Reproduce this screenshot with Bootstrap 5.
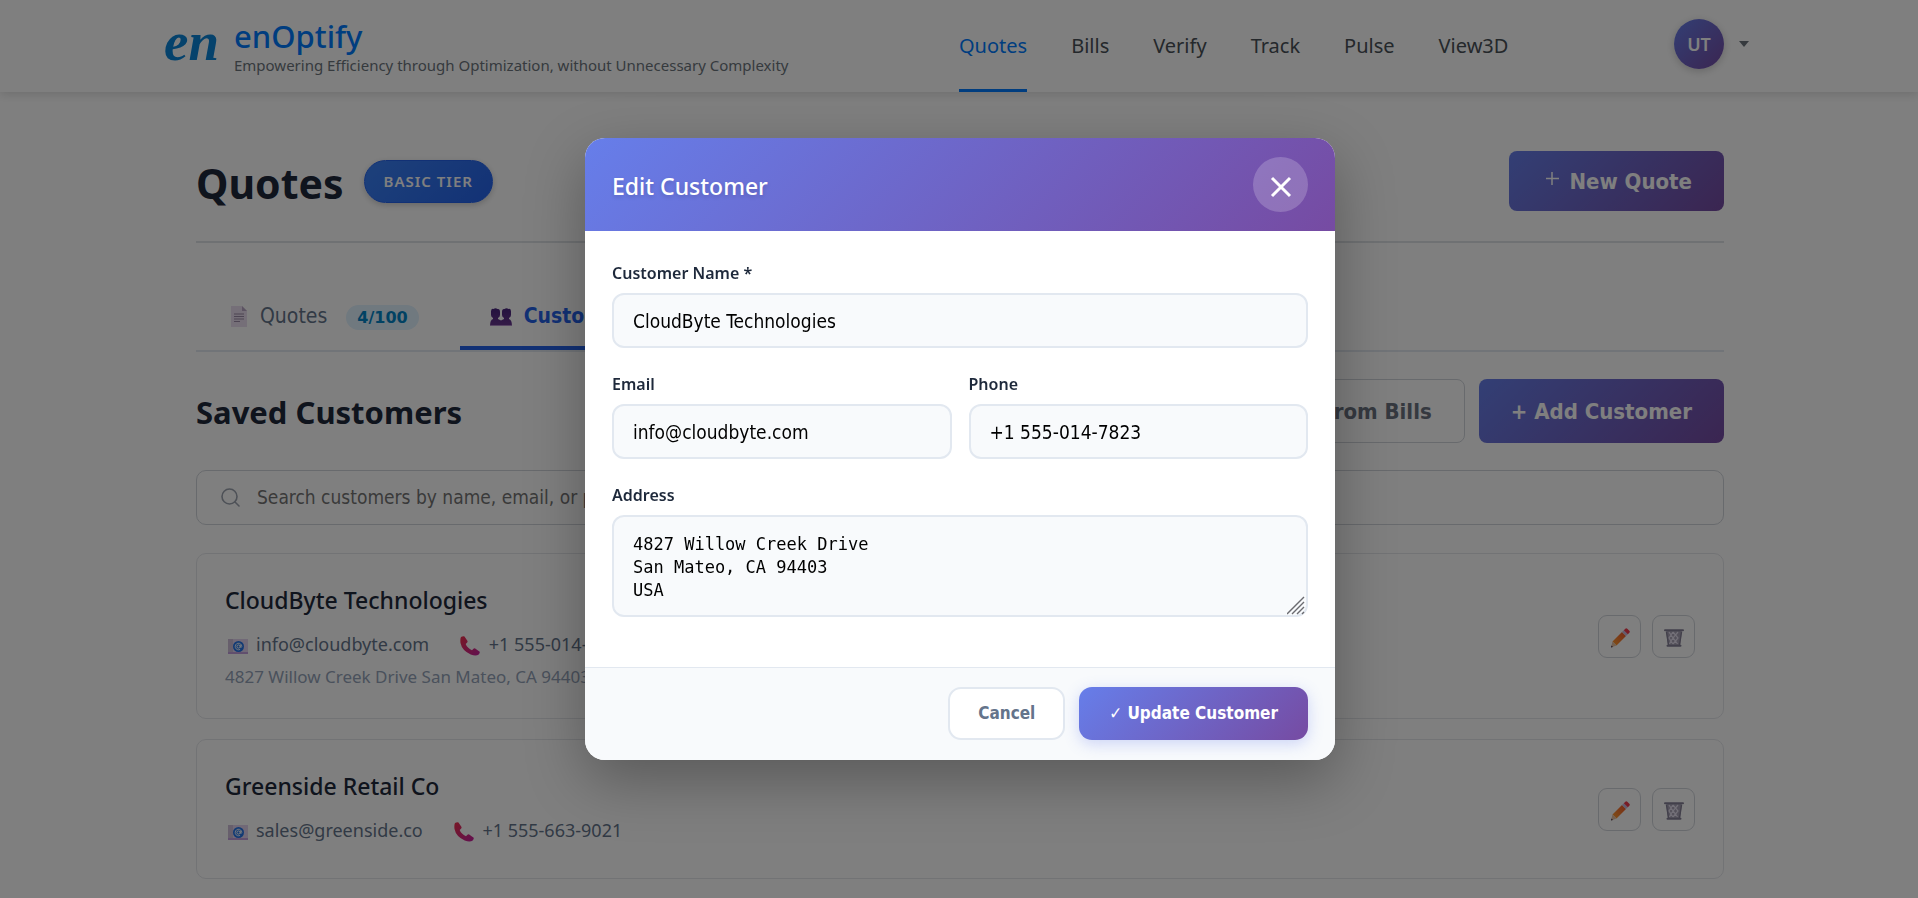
<!DOCTYPE html>
<html lang="en">
<head>
<meta charset="utf-8">
<meta name="viewport" content="width=device-width, initial-scale=1">
<title>enOptify – Quotes</title>
<link rel="stylesheet" href="https://cdn.jsdelivr.net/npm/bootstrap@5.3.0/dist/css/bootstrap.min.css">
<style>
:root{
  --ui:"Noto Sans","Open Sans",sans-serif;
  --alt:"DejaVu Sans Condensed","DejaVu Sans",sans-serif;
  --brand-grad:linear-gradient(135deg,#667eea 0%,#764ba2 100%);
}
body{font-family:var(--ui);background:#fff;color:#1e293b;overflow:hidden}

/* top bar */
.topbar{height:92px;background:#fff;box-shadow:0 2px 10px rgba(0,0,0,.15)}
.topbar-in{max-width:1590px;height:100%;display:grid;grid-template-columns:1fr 1fr}
.logo-mark{width:58px;font-family:"Liberation Serif",serif;font-style:italic;font-weight:700;font-size:55px;line-height:48px;padding-bottom:8px;color:#0a84d8}
.brand-name{font-size:31px;line-height:37px;font-weight:500;color:#007bff}
.brand-tag{font-size:15px;line-height:20px;color:#6c757d}
.main-nav{gap:44px}
.main-nav .nav-link{display:flex;align-items:center;height:92px;padding:3px 0 0;font-size:20px;color:#495057;border-bottom:3px solid transparent}
.main-nav .nav-link.active{color:#007bff;border-color:#007bff}
.user-menu{border:0;background:none;padding:0 5px 4px 0;gap:15px}
.avatar{width:50px;height:50px;border-radius:50%;background:var(--brand-grad);color:#fff;font-size:18px;font-weight:600;box-shadow:0 2px 8px rgba(0,0,0,.2)}
.caret{border:5px solid transparent;border-top:6px solid #6c757d;border-bottom:0}

/* page */
.page{max-width:1530px;padding:0 0 0 2px}
.title-row{padding:59px 0 30px;border-bottom:2px solid #dee2e6}
.page-title{font-size:41px;line-height:56px;font-weight:700;margin:0;padding-top:4px}
.tier{height:43px;padding:0 19px;border:1px solid #2563eb;border-radius:22px;background:linear-gradient(135deg,#3b82f6,#2563eb);color:#fff;font-size:15px;font-weight:600;letter-spacing:1px;box-shadow:0 2px 6px rgba(0,0,0,.2)}
.grad-btn,.plain-btn{font-family:var(--alt);font-weight:700;font-size:22px;border-radius:8px;padding:0 32px;white-space:nowrap}
.grad-btn{border:0;background:var(--brand-grad);color:#fff}
.plain-btn{border:1px solid #d1d5db;background:#fff;color:#6b7280}
.tab-row{padding-top:43px;gap:9px;border-bottom:2px solid #e2e8f0}
.tab-btn{display:flex;align-items:center;height:64px;padding:2px 32px 0 34px;border:0;border-bottom:4px solid transparent;background:none;font-family:var(--alt);font-size:21px;color:#64748b}
.tab-btn svg{margin-right:12px}
.tab-btn.active{padding-left:30px;font-weight:700;color:#2563eb;border-color:#2563eb}
.count{height:25px;margin-left:19px;padding:0 11px;border-radius:13px;background:#e0f2fe;color:#0284c7;font-family:"DejaVu Sans",sans-serif;font-weight:700;font-size:16px;line-height:25px}
.section-row{padding:27px 0}
.section-row h2{font-size:31px;font-weight:700;margin:0;padding-top:4px}
.section-row button{height:64px}
.btn-pair{gap:14px}
.search-box{height:55px;border:1px solid #d1d5db;border-radius:10px;padding:0 24px;gap:15px;margin-bottom:28px}
.search-box input{flex:1;border:0;outline:0;background:none;font-family:var(--alt);font-size:19px}
.search-box input::placeholder{color:#757575}
.cust{border:1px solid #e5e7eb;border-radius:10px;padding:28px;margin-bottom:20px}
.cust h3{font-size:23px;line-height:36px;font-weight:500;margin:0 0 12px}
.cust-info{font-size:18px;line-height:28px;color:#64748b;margin-bottom:6px;gap:31px}
.cust-info svg{margin:0 8px 0 3px}
.cust-info .tel{margin:0 4px 0 0}
.cust-addr{font-size:17px;line-height:26px;color:#94a3b8}
.tools{gap:11px}
.icon-btn{width:43px;height:43px;border:1px solid #d1d5db;border-radius:9px;background:#fff;padding:0}

/* dialog */
#editCustomer{padding-left:2px}
#editCustomer .modal-dialog{max-width:750px}
#editCustomer .modal-content{border:0;border-radius:20px;overflow:hidden;box-shadow:0 20px 60px rgba(0,0,0,.3)}
#editCustomer .modal-header{height:93px;padding:0 27px;border:0;border-radius:0;background:var(--brand-grad)}
#editCustomer .modal-title{font-size:23px;font-weight:500;color:#fff;padding-top:3px;text-shadow:0 2px 4px rgba(0,0,0,.15)}
.close-round{width:55px;height:55px;border:0;border-radius:50%;background:rgba(255,255,255,.2);padding:0}
#editCustomer .modal-body{padding:30px 27px 26px}
.field{margin-bottom:24px}
.field label{display:block;font-size:16px;line-height:24px;font-weight:600;margin-bottom:8px}
.field .form-control{height:55px;padding:0 19px;border:2px solid #e2e8f0;border-radius:12px;background:#f8fafc;color:#000;font-family:var(--alt);font-size:19px}
.field textarea.form-control{height:102px;padding:16px 19px;font-family:"DejaVu Sans Mono",monospace;font-size:17px;line-height:23px;resize:none;overflow:hidden}
.grip{right:2px;bottom:2px}
.pair{display:grid;grid-template-columns:1fr 1fr;gap:17px}
#editCustomer .modal-footer{padding:19px 27px 20px;gap:14px;border-top:1px solid #e2e8f0;border-radius:0;background:#f8fafc}
#editCustomer .modal-footer button{height:53px;margin:0;border-radius:13px;font-family:var(--alt);font-size:17px;font-weight:700}
.cancel-btn{padding:0 28px;border:2px solid #e2e8f0;background:#fff;color:#64748b}
.update-btn{padding:0 30px;border:0;background:var(--brand-grad);color:#fff;box-shadow:0 4px 15px rgba(102,126,234,.3)}
</style>
</head>
<body class="modal-open">

<svg class="position-absolute" width="0" height="0" aria-hidden="true">
  <defs>
    <linearGradient id="gPen" x1="0" y1="1" x2="1" y2="0"><stop offset="0" stop-color="#ffa030"/><stop offset="1" stop-color="#f0562c"/></linearGradient>
    <linearGradient id="gTel" x1="0" y1="0" x2="1" y2="1"><stop offset="0" stop-color="#f0304c"/><stop offset="1" stop-color="#c421a0"/></linearGradient>
    <linearGradient id="gPpl" x1="0" y1="0" x2="0" y2="1"><stop offset="0" stop-color="#48247e"/><stop offset="1" stop-color="#6a3890"/></linearGradient>
  </defs>
  <symbol id="i-doc" viewBox="0 0 18 22"><path d="M1 0h11l5 5v16H1z" fill="#eadff0"/><path d="M12 0v5h5z" fill="#b9a6c4"/><path d="M4 8h10M4 10.500h10M4 13h10M4 15.500h6" stroke="#9b8aa6" stroke-width="1"/></symbol>
  <symbol id="i-people" viewBox="0 0 22 18"><path d="M1 3.500Q1 0 3.500 1 5.500-.5 7.500 1 10 .5 10 4v3q0 2-2 3v1l3 1.500 3-1.500v-1q-2-1-2-3V4q0-3.500 2.500-3 2-1.500 4 0Q21 0 21 3.500V7q0 2-2 3v1q3 1 3 7H0q0-6 3-7v-1Q1 9 1 7z" fill="url(#gPpl)"/><path d="M0 17.500h22" stroke="#b08cc8" stroke-width="1"/></symbol>
  <symbol id="i-mail" viewBox="0 0 20 15"><path d="M0 0h20v15H0z" fill="#e3d3ee"/><path d="M0 13h20v2H0z" fill="#c39fdc"/><path d="M0 0h5v13H0z" fill="#cfbfd8"/><circle cx="10.500" cy="7.500" r="5.500" fill="#2474e8"/><circle cx="10.500" cy="7.500" r="1.600" fill="none" stroke="#fff" stroke-width="1"/><path d="M12.300 5.700v2.500q1.200.8 1.500-.8a3.300 3.300 0 1 0-1.700 3" fill="none" stroke="#fff" stroke-width=".9"/></symbol>
  <symbol id="i-tel" viewBox="0 0 20 20"><path d="M1 1q2-1 3.500-.5L7.500 5q.4 1-.8 2l-1 1q1.500 4 6.300 6.300l1.200-1.300q1-1 2-.5l4.500 3.200q.4 1.400-1 2.800-2.700 2.200-8 0Q2 14.500.5 7 0 3 1 1z" fill="url(#gTel)"/></symbol>
  <symbol id="i-pen" viewBox="0 0 20 20"><path d="M2.500 13.500 12 4l4 4-9.500 9.500z" fill="url(#gPen)"/><path d="M2.500 13.500l4 4L1 19.500z" fill="#e7c0a0"/><path d="M1.400 17.500 1 19.500l2-.6z" fill="#40304c"/><path d="M12 4l1.800-1.800 4 4L16 8z" fill="#c9b8dc"/><path d="M13.800 2.200l1.500-1.500q1-1 2 0l2 2q1 1 0 2l-1.500 1.500z" fill="#f0384c"/></symbol>
  <symbol id="i-bin" viewBox="0 0 20 20"><path d="M2 2.500h16l-2 15H4z" fill="#a9a3b6"/><path d="M5 4l2 3-2 3 2 3-1.500 3M9 4l-2 3 2 3-2 3 2 3M9 4l2.500 3L9 10l2.500 3L9 16M14 4l-2.500 3 2.500 3-2.500 3 2 3" fill="none" stroke="#e6e0f0" stroke-width="1.200"/><path d="M2.500 4 4.500 17M17.500 4l-2 13" stroke="#858096" stroke-width="1.400"/><path d="M1 2.300h18M3.500 17.800h13" stroke="#858096" stroke-width="2" stroke-linecap="round"/></symbol>
</svg>

<header class="topbar">
  <div class="container-fluid px-0 topbar-in">
    <div class="d-flex align-items-center">
      <div class="logo-mark me-2" aria-hidden="true">en</div>
      <div class="ps-1">
        <div class="brand-name">enOptify</div>
        <div class="brand-tag">Empowering Efficiency through Optimization, without Unnecessary Complexity</div>
      </div>
    </div>
    <div class="d-flex justify-content-between">
      <nav class="nav main-nav">
        <a class="nav-link active" href="#">Quotes</a>
        <a class="nav-link" href="#">Bills</a>
        <a class="nav-link" href="#">Verify</a>
        <a class="nav-link" href="#">Track</a>
        <a class="nav-link" href="#">Pulse</a>
        <a class="nav-link" href="#">View3D</a>
      </nav>
      <button type="button" class="user-menu d-flex align-items-center" aria-label="User menu">
        <span class="avatar d-flex align-items-center justify-content-center">UT</span>
        <span class="caret"></span>
      </button>
    </div>
  </div>
</header>

<main class="container-fluid page">
  <div class="title-row d-flex align-items-center justify-content-between">
    <div class="d-flex align-items-center">
      <h1 class="page-title me-3 pe-1">Quotes</h1>
      <span class="tier d-flex align-items-center">BASIC TIER</span>
    </div>
    <button type="button" class="grad-btn d-flex align-items-center gap-2 align-self-stretch">
      <svg width="20" height="20" viewBox="0 0 20 20" aria-hidden="true"><path d="M11 1v13M5 7.500h13" stroke="#fff" stroke-width="1.500"/></svg>
      New Quote
    </button>
  </div>

  <div class="tab-row d-flex">
    <button type="button" class="tab-btn">
      <svg width="18" height="22" aria-hidden="true"><use href="#i-doc"/></svg>Quotes
      <span class="count">4/100</span>
    </button>
    <button type="button" class="tab-btn active">
      <svg width="22" height="18" aria-hidden="true"><use href="#i-people"/></svg>Customers
    </button>
  </div>

  <div class="section-row d-flex align-items-center justify-content-between">
    <h2>Saved Customers</h2>
    <div class="d-flex btn-pair">
      <button type="button" class="plain-btn">Import from Bills</button>
      <button type="button" class="grad-btn">+ Add Customer</button>
    </div>
  </div>

  <div class="search-box d-flex align-items-center">
    <svg width="19" height="19" viewBox="0 0 19 19" fill="none" stroke="#9ca3af" stroke-width="1.600" stroke-linecap="round" aria-hidden="true"><circle cx="8.500" cy="8.500" r="7.500"/><path d="M14 14l4 4"/></svg>
    <input type="search" aria-label="Search customers" placeholder="Search customers by name, email, or phone...">
  </div>

  <div class="cust d-flex align-items-center justify-content-between">
    <div>
      <h3>CloudByte Technologies</h3>
      <div class="cust-info d-flex">
        <span><svg width="20" height="15" aria-hidden="true"><use href="#i-mail"/></svg>info@cloudbyte.com</span>
        <span><svg class="tel" width="20" height="20" aria-hidden="true"><use href="#i-tel"/></svg> +1 555-014-7823</span>
      </div>
      <div class="cust-addr">4827 Willow Creek Drive San Mateo, CA 94403 USA</div>
    </div>
    <div class="d-flex tools">
      <button type="button" class="icon-btn" aria-label="Edit"><svg width="20" height="20"><use href="#i-pen"/></svg></button>
      <button type="button" class="icon-btn" aria-label="Delete"><svg width="20" height="20"><use href="#i-bin"/></svg></button>
    </div>
  </div>

  <div class="cust d-flex align-items-center justify-content-between">
    <div>
      <h3>Greenside Retail Co</h3>
      <div class="cust-info d-flex">
        <span><svg width="20" height="15" aria-hidden="true"><use href="#i-mail"/></svg>sales@greenside.co</span>
        <span><svg class="tel" width="20" height="20" aria-hidden="true"><use href="#i-tel"/></svg> +1 555-663-9021</span>
      </div>
    </div>
    <div class="d-flex tools">
      <button type="button" class="icon-btn" aria-label="Edit"><svg width="20" height="20"><use href="#i-pen"/></svg></button>
      <button type="button" class="icon-btn" aria-label="Delete"><svg width="20" height="20"><use href="#i-bin"/></svg></button>
    </div>
  </div>
</main>

<div class="modal-backdrop show"></div>
<div class="modal d-block" id="editCustomer" tabindex="-1" role="dialog" aria-modal="true" aria-labelledby="editTitle">
  <div class="modal-dialog modal-dialog-centered">
    <form class="modal-content">
      <div class="modal-header d-flex align-items-center justify-content-between">
        <h2 class="modal-title" id="editTitle">Edit Customer</h2>
        <button type="button" class="close-round" aria-label="Close">
          <svg width="54" height="54" viewBox="0 0 54 54" fill="none" stroke="#fff" stroke-width="3" aria-hidden="true"><path d="M18 20l18 18M36 20 18 38"/></svg>
        </button>
      </div>
      <div class="modal-body">
        <div class="field">
          <label for="cName">Customer Name *</label>
          <input class="form-control" id="cName" type="text" value="CloudByte Technologies">
        </div>
        <div class="pair">
          <div class="field">
            <label for="cMail">Email</label>
            <input class="form-control" id="cMail" type="email" value="info@cloudbyte.com">
          </div>
          <div class="field">
            <label for="cTel">Phone</label>
            <input class="form-control" id="cTel" type="tel" value="+1 555-014-7823">
          </div>
        </div>
        <div class="field position-relative">
          <label for="cAddr">Address</label>
          <textarea class="form-control" id="cAddr">4827 Willow Creek Drive
San Mateo, CA 94403
USA</textarea>
          <svg class="grip position-absolute" width="19" height="19" viewBox="0 0 19 19" stroke="#6b6b70" stroke-width="1.400" aria-hidden="true"><path d="M0 18 17 1M5 18 17 6M10 18l7-7M15 18l2-2"/></svg>
        </div>
      </div>
      <div class="modal-footer">
        <button type="button" class="cancel-btn">Cancel</button>
        <button type="button" class="update-btn">✓ Update Customer</button>
      </div>
    </form>
  </div>
</div>

<script src="https://cdn.jsdelivr.net/npm/bootstrap@5.3.0/dist/js/bootstrap.bundle.min.js"></script>
</body>
</html>
